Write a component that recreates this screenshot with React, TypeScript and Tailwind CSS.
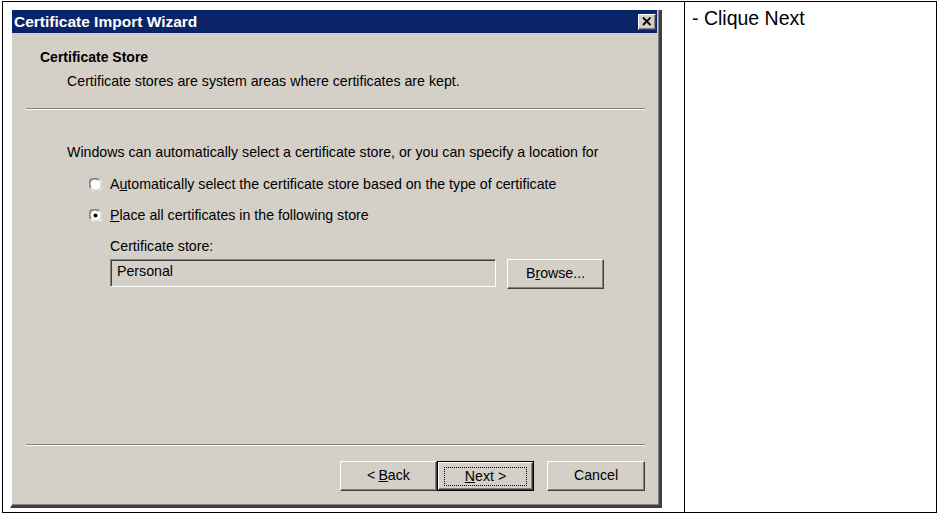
import React from "react";

const ui = { fontFamily: '"Liberation Sans", Arial, sans-serif' };

function Radio({ checked }: { checked?: boolean }) {
    return (
        <svg width="13" height="13" viewBox="0 0 13 13" className="shrink-0">
            <circle cx="6.5" cy="6.5" r="5.5" fill="#ffffff" />
            <path d="M1.2 10.2 A6 6 0 0 1 10.2 1.2" fill="none" stroke="#808080" strokeWidth="1" />
            <path d="M2.2 9.2 A4.8 4.8 0 0 1 9.2 2.2" fill="none" stroke="#404040" strokeWidth="1" />
            <path d="M11.8 2.8 A6 6 0 0 1 2.8 11.8" fill="none" stroke="#ffffff" strokeWidth="1" />
            <path d="M10.8 3.8 A4.8 4.8 0 0 1 3.8 10.8" fill="none" stroke="#d4d0c8" strokeWidth="1" />
            {checked && <circle cx="6.5" cy="6.5" r="2" fill="#000000" />}
        </svg>
    );
}

function Button({
    children,
    width,
    isDefault,
}: {
    children: React.ReactNode;
    width: string;
    isDefault?: boolean;
}) {
    if (isDefault) {
        return (
            <div className={`${width} h-[30px] border border-black`}>
                <div className="flex h-full w-full items-center justify-center border border-t-white border-l-white border-r-[#404040] border-b-[#404040] bg-[#d4d0c8] shadow-[inset_-1px_-1px_#808080]">
                    <span className="border border-dotted border-black px-[20px] py-0 text-[14.2px] leading-[17px] text-black">
                        {children}
                    </span>
                </div>
            </div>
        );
    }
    return (
        <div
            className={`${width} flex h-[30px] items-center justify-center border border-t-white border-l-white border-r-[#404040] border-b-[#404040] bg-[#d4d0c8] text-[14.2px] text-black shadow-[inset_-1px_-1px_#808080]`}
        >
            {children}
        </div>
    );
}

function Separator() {
    return (
        <div className="ml-[14px] w-[619px]">
            <div className="h-px bg-[#808080]" />
            <div className="h-px bg-white" />
        </div>
    );
}

function Wizard() {
    return (
        <div
            className="flex h-[498px] w-[652px] flex-col border-l-2 border-r-[3px] border-b-[3px] border-l-white border-r-[#404040] border-b-[#404040] bg-[#d4d0c8] shadow-[inset_-1px_-1px_#808080]"
            style={ui}
        >
            <div className="mr-[2px] flex h-[23px] items-center justify-between bg-[#0a246a] pl-[2px] pr-[1px]">
                <span className="text-[15.5px] font-bold text-white">Certificate Import Wizard</span>
                <div className="flex h-[16px] w-[18px] items-center justify-center border border-t-white border-l-white border-r-[#404040] border-b-[#404040] bg-[#d4d0c8] shadow-[inset_-1px_-1px_#808080]">
                    <svg width="10" height="9" viewBox="0 0 10 9">
                        <path d="M1 0.5 L8.5 8 M8.5 0.5 L1 8" stroke="#000" strokeWidth="1.8" />
                    </svg>
                </div>
            </div>

            <div className="flex flex-1 flex-col text-[14.2px] text-black">
                <div className="mt-[16px] pl-[28px] text-[14px] font-bold leading-[16px]">Certificate Store</div>
                <div className="mt-[8px] pl-[55px] leading-[16px]">
                    Certificate stores are system areas where certificates are kept.
                </div>
                <div className="mt-[19px]">
                    <Separator />
                </div>

                <div className="mt-[34px] pl-[55px] leading-[16px]">
                    Windows can automatically select a certificate store, or you can specify a location for
                </div>
                <div className="mt-[16px] flex items-center gap-[8px] pl-[77px] leading-[16px]">
                    <Radio />
                    <span>
                        A<span className="underline">u</span>tomatically select the certificate store based on the
                        type of certificate
                    </span>
                </div>
                <div className="mt-[15px] flex items-center gap-[8px] pl-[77px] leading-[16px]">
                    <Radio checked />
                    <span>
                        <span className="underline">P</span>lace all certificates in the following store
                    </span>
                </div>
                <div className="mt-[15px] pl-[98px] leading-[16px]">Certificate store:</div>
                <div className="mt-[5px] flex gap-[11px] pl-[98px]">
                    <div className="flex h-[28px] w-[386px] items-center border border-t-[#808080] border-l-[#808080] border-r-white border-b-white pb-[2px] pl-[6px] shadow-[inset_1px_1px_#404040]">
                        Personal
                    </div>
                    <Button width="w-[97px]">
                        B<span className="underline">r</span>owse...
                    </Button>
                </div>

                <div className="mt-auto">
                    <Separator />
                </div>
                <div className="mb-[14px] mt-[15px] flex pl-[328px]">
                    <Button width="w-[97px]">
                        &lt; <span className="ml-[3px] underline">B</span>ack
                    </Button>
                    <Button width="w-[97px]" isDefault>
                        <span className="underline">N</span>ext &gt;
                    </Button>
                    <div className="ml-[13px]">
                        <Button width="w-[98px]">Cancel</Button>
                    </div>
                </div>
            </div>
        </div>
    );
}

export default function App() {
    return (
        <div className="h-[517px] w-[940px] overflow-hidden bg-white pl-[2px] pt-[1px]">
            <div className="flex h-[512px] w-[935px] border border-black">
                <div className="w-[682px] border-r border-black pl-[7px] pt-[8px]">
                    <Wizard />
                </div>
                <div className="flex-1 pl-[7px] pt-[5px]">
                    <div className="text-[19.5px] leading-[23px] text-black" style={ui}>
                        - Clique Next
                    </div>
                </div>
            </div>
        </div>
    );
}
